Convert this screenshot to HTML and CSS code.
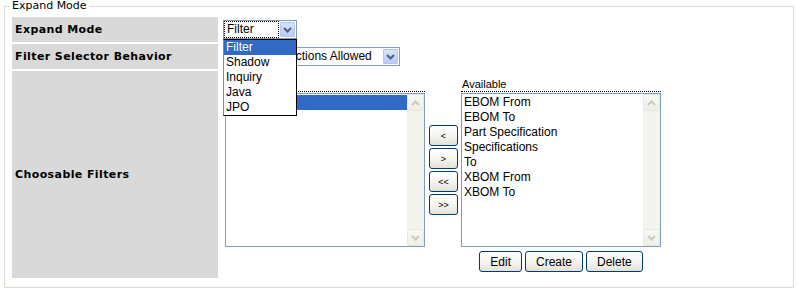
FILE: index.html
```html
<!DOCTYPE html>
<html>
<head>
<meta charset="utf-8">
<link rel="stylesheet" href="styles.css">
</head>
<body>

<fieldset class="panel">
  <legend>Expand Mode</legend>
  <div class="form">

    <div class="label">Expand Mode</div>
    <div class="field">
      <div class="select select-mode">
        <span class="value focused">Filter</span>
        <span class="arrow"><svg width="9" height="6" viewBox="0 0 9 6"><path d="M1 1l3.5 3.5L8 1" stroke="#4d6185" stroke-width="2" fill="none"/></svg></span>
        <ul class="dropdown">
          <li class="selected">Filter</li>
          <li>Shadow</li>
          <li>Inquiry</li>
          <li>Java</li>
          <li>JPO</li>
        </ul>
      </div>
    </div>

    <div class="label">Filter Selector Behavior</div>
    <div class="field">
      <div class="select select-behavior">
        <span class="value">Multiple Selections Allowed</span>
        <span class="arrow"><svg width="9" height="6" viewBox="0 0 9 6"><path d="M1 1l3.5 3.5L8 1" stroke="#4d6185" stroke-width="2" fill="none"/></svg></span>
      </div>
    </div>

    <div class="label">Choosable Filters</div>
    <div class="field chooser">
      <div class="col">
        <div class="col-head"></div>
        <div class="listbox">
          <ul>
            <li class="selected"></li>
          </ul>
          <div class="scrollbar">
            <span class="scroll-btn"><svg width="9" height="6" viewBox="0 0 9 6"><path d="M1 5l3.5-3.5L8 5" stroke="#cbc9bd" stroke-width="2" fill="none"/></svg></span>
            <span class="scroll-btn"><svg width="9" height="6" viewBox="0 0 9 6"><path d="M1 1l3.5 3.5L8 1" stroke="#cbc9bd" stroke-width="2" fill="none"/></svg></span>
          </div>
        </div>
      </div>

      <div class="moves">
        <button class="btn">&lt;</button>
        <button class="btn">&gt;</button>
        <button class="btn">&lt;&lt;</button>
        <button class="btn">&gt;&gt;</button>
      </div>

      <div class="col">
        <div class="col-head">Available</div>
        <div class="listbox">
          <ul>
            <li>EBOM From</li>
            <li>EBOM To</li>
            <li>Part Specification</li>
            <li>Specifications</li>
            <li>To</li>
            <li>XBOM From</li>
            <li>XBOM To</li>
          </ul>
          <div class="scrollbar">
            <span class="scroll-btn"><svg width="9" height="6" viewBox="0 0 9 6"><path d="M1 5l3.5-3.5L8 5" stroke="#cbc9bd" stroke-width="2" fill="none"/></svg></span>
            <span class="scroll-btn"><svg width="9" height="6" viewBox="0 0 9 6"><path d="M1 1l3.5 3.5L8 1" stroke="#cbc9bd" stroke-width="2" fill="none"/></svg></span>
          </div>
        </div>
        <div class="actions">
          <button class="btn">Edit</button>
          <button class="btn">Create</button>
          <button class="btn">Delete</button>
        </div>
      </div>
    </div>

  </div>
</fieldset>

</body>
</html>
```

FILE: styles.css
```css
html, body {margin: 0; padding: 0; background: #fff;}
body {font: 12px "Liberation Sans", Arial, sans-serif; color: #000;}
ul {margin: 0; padding: 0; list-style: none;}

/*fieldset*/
.panel {
  margin: 0 3px 0 4px; padding: 5px 7px 9px 7px;
  border: 1px solid #dedcd0; min-width: 0;
}
.panel legend {
  margin-left: -2px; padding: 0 2px;
  font: 11px/12px "DejaVu Sans", Verdana, sans-serif;
}

/*form grid*/
.form {
  display: grid; gap: 2px;
  grid-template-columns: 206px 1fr;
  grid-template-rows: 25px 25px 207px;
}
.label {
  background: #d9d9d9; padding-left: 3px;
  display: flex; align-items: center;
  font: bold 11px "DejaVu Sans", Verdana, sans-serif;
  letter-spacing: 0.4px;
}
.field {position: relative; padding: 3px 0 0 3px;}

/*selects*/
.select {
  position: relative; box-sizing: border-box; height: 19px;
  border: 1px solid #7f9db9; background: #fff;
  display: flex; align-items: center;
}
.select-mode {width: 74px;}
.select-behavior {width: 177px;}
.select .value {
  flex: 1; height: 17px; line-height: 17px; padding-left: 3px;
  white-space: nowrap; overflow: hidden; box-sizing: border-box;
}
.select .value.focused {border: 1px dotted #000; line-height: 15px; padding-left: 2px; margin-right: 1px;}
.select .arrow {
  width: 15px; height: 15px; margin-right: 1px; box-sizing: border-box;
  border: 1px solid #b2c6f3; border-radius: 1px;
  background: linear-gradient(#d6e1fd, #b9cbf7);
  display: flex; align-items: center; justify-content: center;
}
.dropdown {
  position: absolute; top: 18px; left: -1px; z-index: 5;
  width: 74px; box-sizing: border-box; background: #fff;
  border: 1px solid #000; border-left-color: #8a8a8a;
}
.dropdown li {height: 15px; line-height: 15px; padding-left: 2px;}
.dropdown li.selected {background: #316ac5; color: #fff;}

/*chooser*/
.chooser {display: flex; padding: 6px 0 0 5px;}
.col {width: 200px;}
.col-head {
  height: 14px; line-height: 14px; padding-left: 1px;
  border-bottom: 1px dotted #000; margin-bottom: 1px;
  font-size: 11px;
}
.listbox {
  display: flex; width: 200px; height: 154px; box-sizing: border-box;
  border: 1px solid #7f9db9; background: #fff;
}
.listbox ul {flex: 1; padding-top: 1px;}
.listbox li {height: 15px; line-height: 15px; padding-left: 2px; white-space: nowrap;}
.listbox li.selected {background: #316ac5; color: #fff;}
.scrollbar {
  width: 17px; background: #f4f3ee;
  display: flex; flex-direction: column; justify-content: space-between;
}
.scroll-btn {
  height: 17px; box-sizing: border-box;
  border: 1px solid #eae8de; border-radius: 2px;
  background: linear-gradient(#f8f8f4, #efeee7);
  display: flex; align-items: center; justify-content: center;
}

/*buttons*/
.btn {
  height: 21px; padding: 0 10px; margin: 0;
  border: 1px solid #003c74; border-radius: 3px;
  background: linear-gradient(#ffffff, #f4f4ef 55%, #e4e2d7);
  font: 12px "Liberation Sans", Arial, sans-serif; color: #000;
}
.moves {
  width: 32px; padding: 48px 0 0 4px;
  display: flex; flex-direction: column; align-items: flex-start; gap: 2px;
}
.moves .btn {width: 29px; padding: 0; font-size: 9px;}
.actions {display: flex; justify-content: center; gap: 3px; margin-top: 4px;}
```
